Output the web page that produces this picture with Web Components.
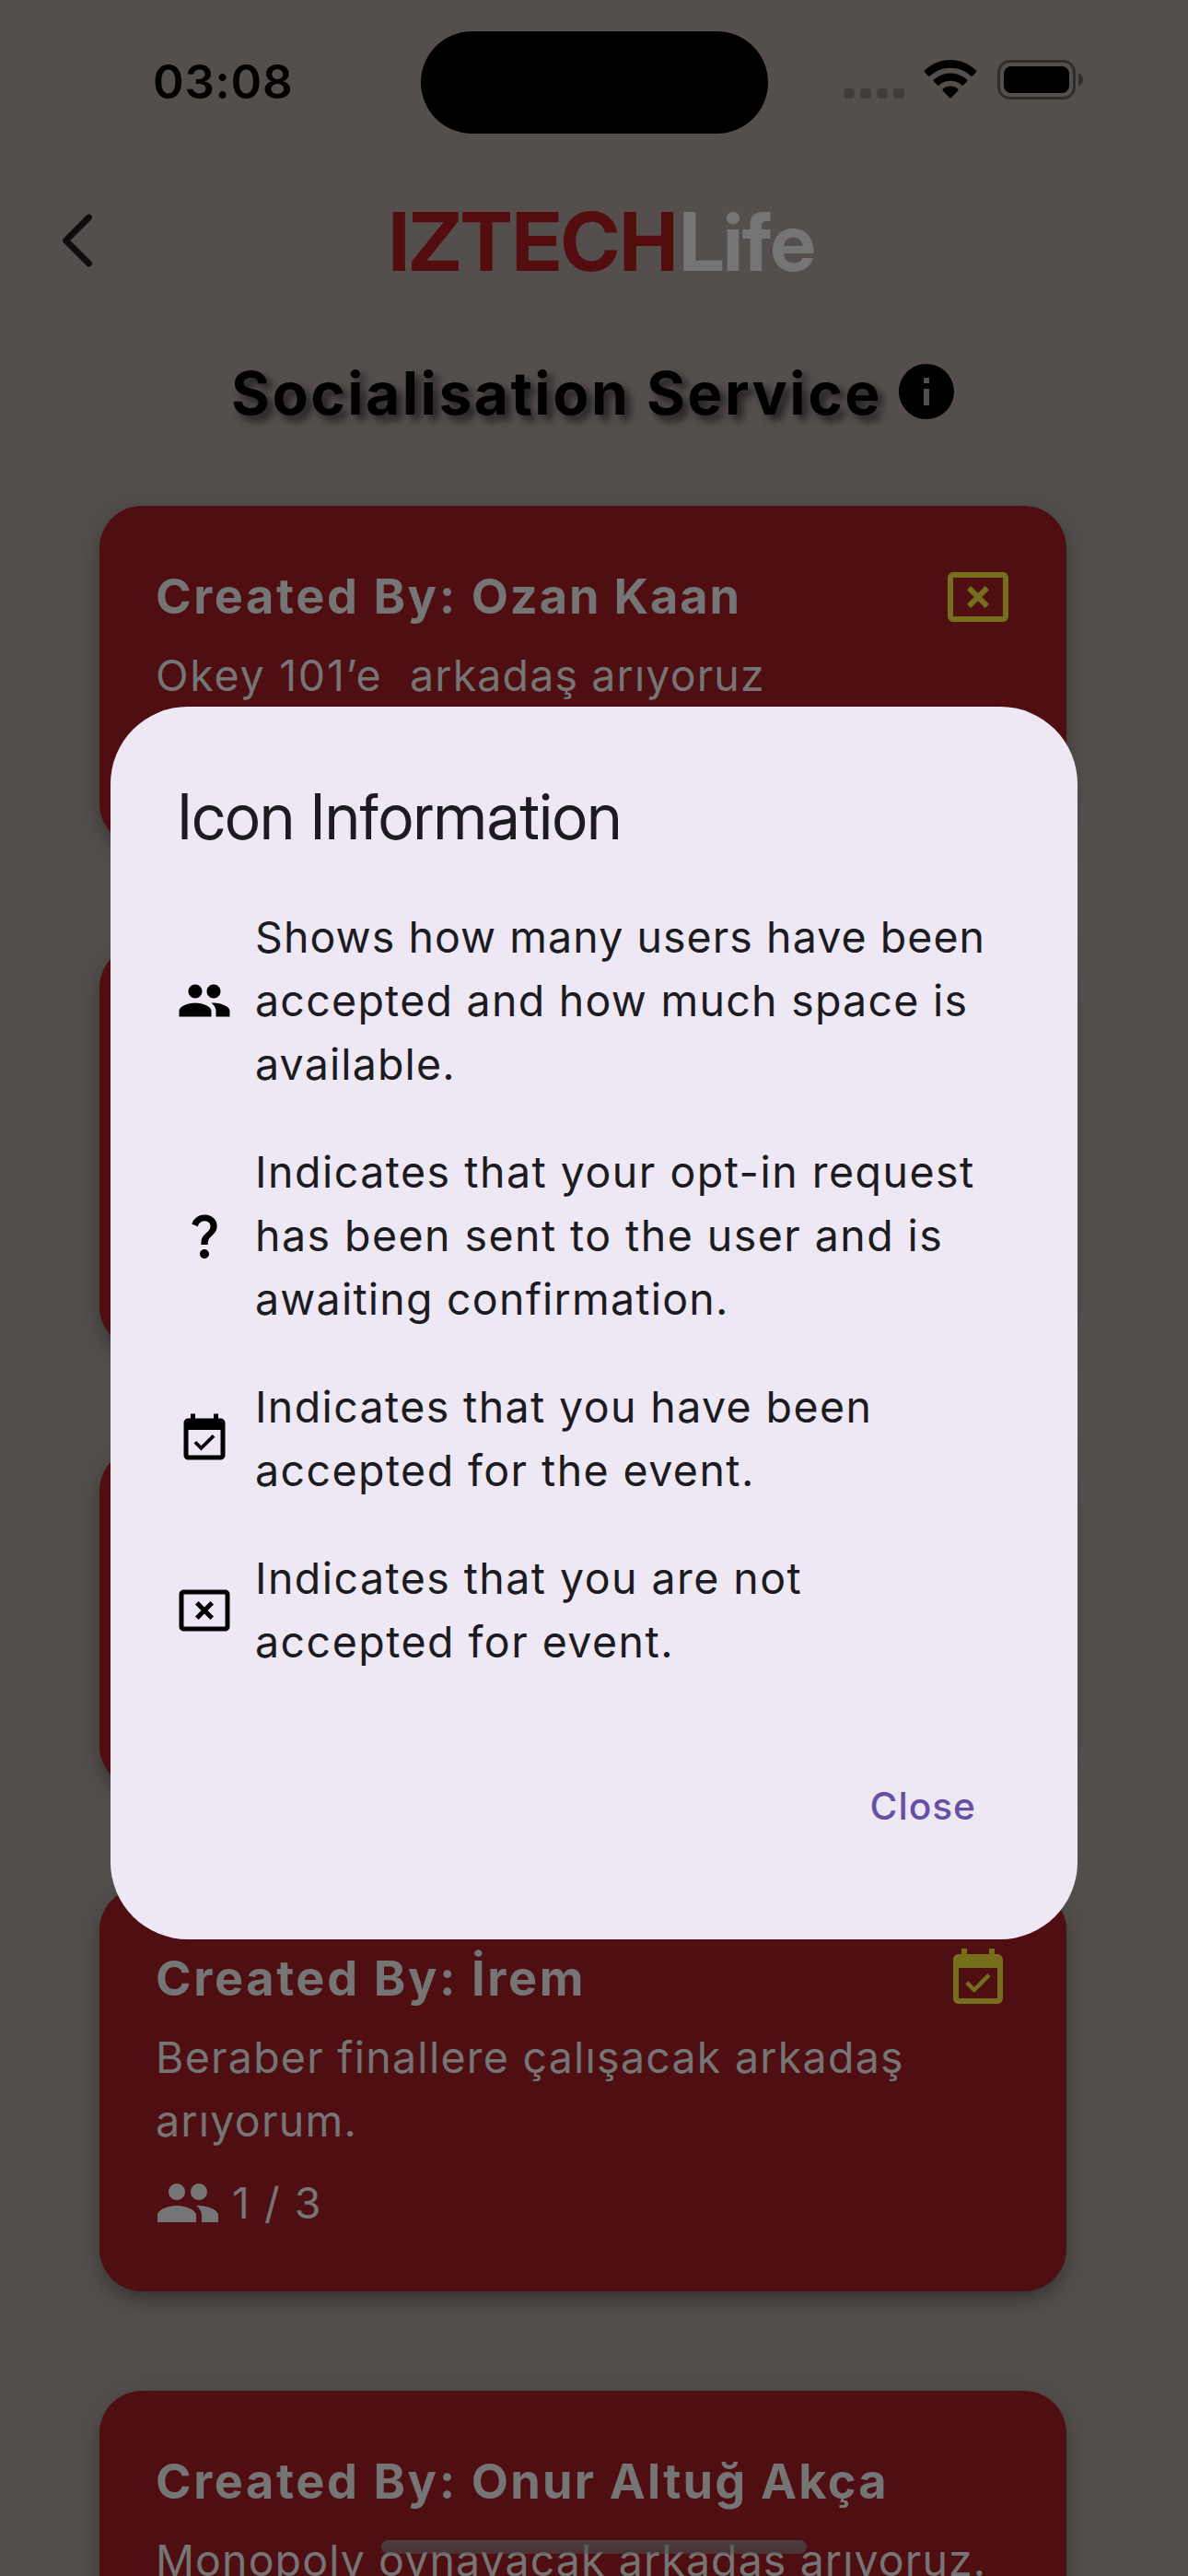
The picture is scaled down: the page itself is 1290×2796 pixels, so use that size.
<!DOCTYPE html>
<html lang="tr">
<head>
<meta charset="utf-8">
<title>IZTECHLife – Socialisation Service</title>
<style>
  html, body { margin: 0; height: 2796px; overflow: hidden; background: #544e4d; }
  body { font-family: Inter, "Liberation Sans", sans-serif; }
</style>
</head>
<body>
<app-screen>
  <status-bar slot="status" time="03:08"></status-bar>
  <app-header slot="header"></app-header>
  <page-title slot="title">Socialisation Service</page-title>

  <event-card icon="cancel">
    <span slot="author"><span style="letter-spacing:2.57px">Created By: </span><span style="letter-spacing:1.88px">Ozan Kaan</span></span>
    <span slot="text"><span style="letter-spacing:1.75px">Okey 101’e&nbsp; </span><span style="letter-spacing:1.13px">arkadaş arıyoruz</span></span>
    <span slot="count"></span>
  </event-card>
  <event-card icon="none" style="min-height:438px"></event-card>
  <event-card icon="none"></event-card>
  <event-card icon="available">
    <span slot="author" style="letter-spacing:2.6px">Created By: İrem</span>
    <span slot="text" style="letter-spacing:1.25px">Beraber finallere çalışacak arkadaş arıyorum.</span>
    <span slot="count">1 / 3</span>
  </event-card>
  <event-card icon="none">
    <span slot="author"><span style="letter-spacing:2.57px">Created By: </span><span style="letter-spacing:2.2px">Onur Altuğ Akça</span></span>
    <span slot="text" style="letter-spacing:1.09px">Monopoly oynayacak arkadaş arıyoruz.</span>
  </event-card>

  <info-dialog slot="dialog" heading="Icon Information" action="Close">
    <info-row icon="people">
      <text-line style="letter-spacing:1.06px">Shows how many users have been</text-line>
      <text-line style="letter-spacing:1.26px">accepted and how much space is</text-line>
      <text-line style="letter-spacing:1.15px">available.</text-line>
    </info-row>
    <info-row icon="question">
      <text-line style="letter-spacing:1.49px">Indicates that your opt-in request</text-line>
      <text-line style="letter-spacing:1.44px">has been sent to the user and is</text-line>
      <text-line style="letter-spacing:1.22px">awaiting confirmation.</text-line>
    </info-row>
    <info-row icon="available">
      <text-line style="letter-spacing:1.38px">Indicates that you have been</text-line>
      <text-line style="letter-spacing:1.42px">accepted for the event.</text-line>
    </info-row>
    <info-row icon="cancel">
      <text-line style="letter-spacing:1.44px">Indicates that you are not</text-line>
      <text-line style="letter-spacing:1.47px">accepted for event.</text-line>
    </info-row>
  </info-dialog>
</app-screen>

<script>
const ICONS = {
  people: 'M16 11c1.66 0 2.99-1.34 2.99-3S17.66 5 16 5c-1.66 0-3 1.34-3 3s1.34 3 3 3zm-8 0c1.66 0 2.99-1.34 2.99-3S9.66 5 8 5C6.34 5 5 6.34 5 8s1.34 3 3 3zm0 2c-2.33 0-7 1.17-7 3.5V19h14v-2.5c0-2.33-4.67-3.5-7-3.5zm8 0c-.29 0-.62.02-.97.05 1.16.84 1.97 1.97 1.97 3.45V19h6v-2.5c0-2.33-4.67-3.5-7-3.5z',
  question: 'M11.07 12.85c.77-1.39 2.25-2.21 3.11-3.44.91-1.29.4-3.7-2.18-3.7-1.69 0-2.52 1.28-2.87 2.34L6.54 6.96C7.25 4.83 9.18 3 11.99 3c2.35 0 3.96 1.07 4.78 2.41.7 1.15 1.11 3.3.03 4.9-1.2 1.77-2.35 2.31-2.97 3.45-.25.46-.35.76-.35 2.24h-2.89c-.01-.78-.13-2.05.48-3.15zM14 20c0 1.1-.9 2-2 2s-2-.9-2-2 .9-2 2-2 2 .9 2 2z',
  available: 'M16.53 11.06L15.47 10l-4.88 4.88-2.12-2.12-1.06 1.06L10.59 17l5.94-5.94zM19 3h-1V1h-2v2H8V1H6v2H5c-1.11 0-1.99.9-1.99 2L3 19c0 1.1.89 2 2 2h14c1.1 0 2-.9 2-2V5c0-1.1-.9-2-2-2zm0 16H5V8h14v11z',
  cancel: 'M21 3H3c-1.1 0-2 .9-2 2v14c0 1.1.9 2 2 2h18c1.1 0 2-.9 2-2V5c0-1.1-.9-2-2-2zm0 16H3V5h18v14zM9.41 16L12 13.41 14.59 16 16 14.59 13.41 12 16 9.41 14.59 8 12 10.59 9.41 8 8 9.41 10.59 12 8 14.59 9.41 16z',
  info: 'M12 2C6.48 2 2 6.48 2 12s4.48 10 10 10 10-4.48 10-10S17.52 2 12 2zm1 15h-2v-6h2v6zm0-8h-2V7h2v2z'
};

function define(name, render) {
  customElements.define(name, class extends HTMLElement {
    connectedCallback() {
      if (this.shadowRoot) return;
      this.attachShadow({ mode: 'open' }).innerHTML = render(this);
    }
  });
}

define('m-icon', el => `
  <style>:host{display:block;flex:none;width:var(--size,72px);height:var(--size,72px)}svg{display:block;width:100%;height:100%;fill:currentColor}</style>
  <svg viewBox="0 0 24 24"><path fill-rule="evenodd" d="${ICONS[el.getAttribute('name')] || ''}"/></svg>`);

define('status-bar', el => `
  <style>
    :host{display:flex;align-items:flex-start;height:210px;box-sizing:border-box;padding:33px 0 0 166px;color:#000}
    .time{font:600 51px/60px Inter,sans-serif;letter-spacing:.75px;width:291px;padding-top:26px;box-sizing:border-box}
    .island{width:377px;height:111px;border-radius:56px;background:#000;margin-top:.5px}
    .dots{display:flex;gap:6.5px;margin:63px 0 0 82px}
    .dots i{width:11.5px;height:11px;border-radius:4px;background:#423d3c}
    .wifi{margin:31px 0 0 21px}
    .bat{margin:31px 0 0 22px}
    svg{display:block}
  </style>
  <span class="time">${el.getAttribute('time')}</span>
  <span class="island"></span>
  <span class="dots"><i></i><i></i><i></i><i></i></span>
  <svg class="wifi" width="58" height="44" viewBox="0 0 58 44">
    <path d="M29 1C18 1 8 5.500 1 12.500q-.8.900 0 1.800L5 18.500q.8.800 1.700 0C12.500 13 20.500 9.800 29 9.800S45.500 13 51.300 18.500q.9.800 1.700 0L57 14.300q.8-.900 0-1.800C50 5.500 40 1 29 1z"/>
    <path d="M29 15.600c-7 0-13.200 2.700-18 7q-.9.900 0 1.800l3.900 4q.8.800 1.700.100c3.300-2.900 7.600-4.700 12.400-4.700s9.100 1.800 12.400 4.700q.9.700 1.700-.100l3.900-4q.9-.900 0-1.800c-4.800-4.300-11-7-18-7z"/>
    <path d="M29 29.600c-3.100 0-6 1.200-8.200 3.100q-.9.900 0 1.800L28 42.100q1 1 2 0l7.200-7.600q.9-.900 0-1.800C35 30.800 32.100 29.600 29 29.600z"/>
  </svg>
  <svg class="bat" width="96" height="46" viewBox="0 0 96 46">
    <rect x="1.500" y="2.500" width="82" height="40" rx="12" fill="none" stroke="#312d2c" stroke-width="3"/>
    <rect x="7" y="8" width="71" height="29" rx="8"/>
    <path d="M88 15.500c3 1 5 4 5 7s-2 6-5 7z" fill="#312d2c"/>
  </svg>`);

define('app-header', () => `
  <style>
    :host{display:flex;align-items:center;height:104px;padding-left:65px}
    svg{flex:none;width:40px;height:64px;margin-top:-3px}
    h1{margin:0 0 0 317px;font:700 87.5px/105px "Inter Display",Inter,sans-serif;white-space:nowrap;color:#530d0e;letter-spacing:.11px}
    h1 span{margin-left:1.5px;color:#757575;letter-spacing:-.92px}
  </style>
  <svg viewBox="0 0 40 64" fill="none" stroke="#0d0d0f" stroke-width="6.800" stroke-linecap="round" stroke-linejoin="round"><path d="M31.500 7 6.500 32l25 25"/></svg>
  <h1>IZTECH<span>Life</span></h1>`);

define('page-title', () => `
  <style>
    :host{display:flex;align-items:center;gap:12px;height:74px;margin-top:74px;padding-left:251px;color:#000}
    h2{margin:3px 0 0;font:700 64px/78px Inter,sans-serif;letter-spacing:2.49px;white-space:nowrap;text-shadow:6px 6px 9px rgba(0,0,0,.6)}
  </style>
  <h2><slot></slot></h2><m-icon name="info"></m-icon>`);

define('event-card', el => {
  const icon = el.getAttribute('icon');
  return `
  <style>
    :host{display:block;flex:none;width:1050px;min-height:369px;box-sizing:border-box;padding:63px 60px 60px;border-radius:46px;background:#4f0f12;color:#757575;
      box-shadow:0 12px 18px -4px rgba(0,0,0,.28),0 4px 32px rgba(58,64,54,.55)}
    header{display:flex;justify-content:space-between;height:72px;color:#757575}
    header m-icon{color:#756f1b}
    .author{padding-left:1px;font:700 52.3px/70px Inter,sans-serif;white-space:nowrap}
    .text{margin-top:15px;padding-left:1px;font:400 46.5px/69px Inter,sans-serif}
    .count{display:flex;align-items:center;gap:12px;margin-top:18px;font:400 46.5px/69px Inter,sans-serif;letter-spacing:1.49px}
  </style>
  <header><div class="author"><slot name="author"></slot></div>${icon !== 'none' ? `<m-icon name="${icon}"></m-icon>` : ''}</header>
  <div class="text"><slot name="text"></slot></div>
  ${icon === 'available' ? '<div class="count"><m-icon name="people"></m-icon><slot name="count"></slot></div>' : ''}`;
});

define('text-line', () => `<style>:host{display:block;white-space:nowrap}</style><slot></slot>`);

define('info-row', el => `
  <style>
    :host{display:flex;align-items:center;gap:25px;font:400 46.5px/69px Inter,sans-serif;color:#1c1b1f}
    m-icon{--size:60px;color:#000}
  </style>
  <m-icon name="${el.getAttribute('icon')}"></m-icon><div><slot></slot></div>`);

define('info-dialog', el => `
  <style>
    :host{display:flex;flex-direction:column;box-sizing:border-box;width:1050px;height:1338px;padding:72px 72px 0;border-radius:84px;background:#eee8f4}
    h3{margin:0 0 50px .5px;font:400 69px/94px "Inter Display",Inter,sans-serif;letter-spacing:-.1px;color:#1c1b1f;white-space:nowrap}
    .rows{display:flex;flex-direction:column;gap:48px}
    button{all:unset;align-self:flex-end;margin:119px 38px 0 0;font:500 40.7px/50px Inter,sans-serif;letter-spacing:.98px;color:#6750a4}
  </style>
  <h3>${el.getAttribute('heading')}</h3>
  <div class="rows"><slot></slot></div>
  <button>${el.getAttribute('action')}</button>`);

define('home-indicator', () => `
  <style>:host{display:block;width:462px;height:15px;border-radius:8px;background:linear-gradient(rgba(72,76,78,.75),rgba(74,84,84,.5))}</style>`);

define('app-screen', () => `
  <style>
    :host{display:block;position:relative;width:1290px;height:2796px;overflow:hidden;background:#544e4d}
    .list{display:flex;flex-direction:column;gap:108px;padding:87px 0 0 108px}
    .overlay{position:absolute;left:120px;top:766.5px}
    home-indicator{position:absolute;left:414px;top:2757px}
  </style>
  <slot name="status"></slot>
  <slot name="header"></slot>
  <slot name="title"></slot>
  <div class="list"><slot></slot></div>
  <div class="overlay"><slot name="dialog"></slot></div>
  <home-indicator></home-indicator>`);
</script>
</body>
</html>
